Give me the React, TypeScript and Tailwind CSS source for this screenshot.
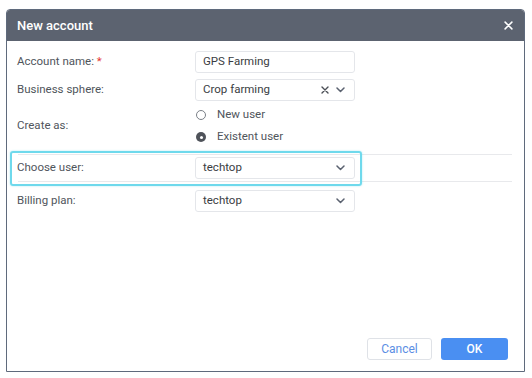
import React from 'react'

const font = { fontFamily: 'Roboto, "Liberation Sans", Arial, sans-serif' }

const Chevron = () => (
  <svg width="9" height="6" viewBox="0 0 9 6" fill="none" stroke="#5b6270" strokeWidth="1.5" strokeLinecap="round" strokeLinejoin="round">
    <path d="M1 1l3.5 3.5L8 1" />
  </svg>
)

const Cross = ({ color = '#4b4f56', size = 8 }: { color?: string; size?: number }) => (
  <svg width={size} height={size} viewBox="0 0 8 8" fill="none" stroke={color} strokeWidth="1.4" strokeLinecap="round">
    <path d="M1 1l6 6M7 1L1 7" />
  </svg>
)

const Label = ({ children }: { children: React.ReactNode }) => (
  <div className="w-[178px] shrink-0 text-[11.5px] text-[#50555c]">{children}</div>
)

const Field = ({ value, clear, select }: { value: string; clear?: boolean; select?: boolean }) => (
  <div className="flex h-[22px] w-[160px] items-center rounded-[3px] border border-[#e4e6ea] bg-white pl-[7px] pr-[9px] text-[11.5px] text-[#3a3d42]">
    <span className="flex-1">{value}</span>
    {clear && (
      <span className="mr-[7px] flex items-center">
        <Cross />
      </span>
    )}
    {select && <Chevron />}
  </div>
)

const Radio = ({ checked, label }: { checked?: boolean; label: string }) => (
  <div className="flex h-[22px] items-center text-[11.5px] text-[#50555c]">
    {checked ? (
      <span className="mr-[11px] flex h-[10px] w-[10px] items-center justify-center rounded-full bg-[#4f535a]">
        <span className="h-[3px] w-[3px] rounded-full bg-white" />
      </span>
    ) : (
      <span className="mr-[11px] h-[10px] w-[10px] rounded-full border border-[#7a7f87] bg-white" />
    )}
    {label}
  </div>
)

export default function App() {
  return (
    <div className="h-[378px] w-[532px] bg-white pl-[6px] pt-[9px]" style={font}>
      <div className="flex h-[363px] w-[519px] flex-col overflow-hidden rounded-t-[4px] border border-[#5f6a7c] bg-white">
        {/* header */}
        <div className="flex h-[31px] shrink-0 items-center justify-between bg-[#5c6370] pl-[10px] pr-[11px]">
          <span className="text-[13px] font-medium text-white">New account</span>
          <Cross color="#ffffff" size={9} />
        </div>

        {/* body */}
        <div className="flex-1 pt-[7px]">
          <div className="mx-[10px] flex h-[28px] items-center">
            <Label>
              Account name: <span className="text-[#e53935]">*</span>
            </Label>
            <Field value="GPS Farming" />
          </div>
          <div className="mx-[10px] flex h-[28px] items-center">
            <Label>Business sphere:</Label>
            <Field value="Crop farming" clear select />
          </div>
          <div className="mx-[10px] flex h-[44px] items-center">
            <Label>Create as:</Label>
            <div className="flex flex-col pl-[1px]">
              <Radio label="New user" />
              <Radio checked label="Existent user" />
            </div>
          </div>
          <div className="relative ml-[11px] mr-[12px] mt-[6px] flex h-[28px] items-center border-y border-[#e8e9ec]">
            <div className="-ml-px">
              <Label>Choose user:</Label>
            </div>
            <Field value="techtop" select />
            <div className="pointer-events-none absolute left-[-8px] top-[-4px] h-[35px] w-[352px] rounded-[3px] border-2 border-[#6fd9ec] shadow-[0_0_2px_rgba(111,217,236,0.6)]" />
          </div>
          <div className="mx-[10px] mt-[5px] flex h-[28px] items-center">
            <Label>Billing plan:</Label>
            <Field value="techtop" select />
          </div>
        </div>

        {/* footer */}
        <div className="flex shrink-0 justify-end gap-[9px] pb-[11px] pr-[16px]">
          <button className="h-[22px] w-[65px] rounded-[3px] border border-[#dfe2e7] bg-white text-[12px] text-[#5b8ee4]">
            Cancel
          </button>
          <button className="h-[22px] w-[67px] rounded-[3px] bg-[#4a8ff2] text-[12px] font-medium text-white">
            OK
          </button>
        </div>
      </div>
    </div>
  )
}
